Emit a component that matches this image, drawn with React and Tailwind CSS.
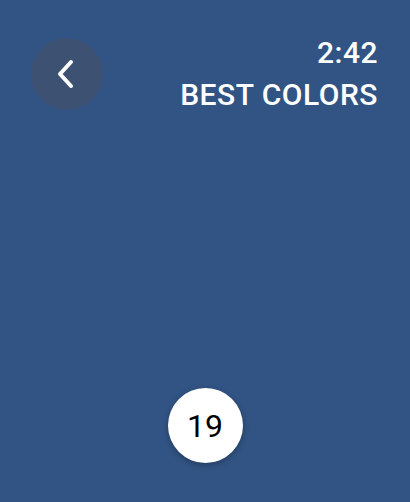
import React from 'react';

function BackButton() {
    return (
        <button className="flex h-[72px] w-[72px] items-center justify-center rounded-full bg-[#3d5172]">
            <svg width="28" height="30" viewBox="0 0 28 30" fill="none">
                <path d="M18 3 L7 15 L18 27" stroke="white" strokeWidth="4" strokeLinecap="round" strokeLinejoin="round"/>
            </svg>
        </button>
    );
}

export default function App() {
    return (
        <div className="flex h-[502px] w-[410px] flex-col bg-[#325484] font-['Roboto',sans-serif]">
            <div className="flex flex-row items-start justify-between pl-[31px] pr-[32px] pt-[32px]">
                <div className="pt-[6px]">
                    <BackButton/>
                </div>
                <div className="flex flex-col items-end text-[30px] font-medium leading-[42px] tracking-[0.5px] text-white">
                    <div>2:42</div>
                    <div>BEST COLORS</div>
                </div>
            </div>
            <div className="flex flex-1 items-end justify-center pb-[39px]">
                <div className="flex h-[75px] w-[75px] items-center justify-center rounded-full bg-white text-[32px] text-black shadow-[0_2px_6px_rgba(0,0,0,0.3)]">
                    19
                </div>
            </div>
        </div>
    );
}
